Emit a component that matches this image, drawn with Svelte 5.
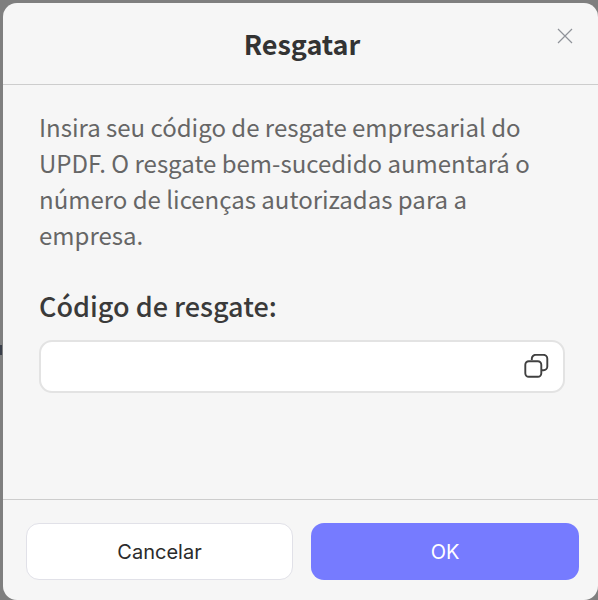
<script lang="ts">
	let code = $state('');
</script>

<div class="backdrop">
	<span class="peek"></span>
	<div class="dialog">
		<header class="head">
			<h1>Resgatar</h1>
			<button class="close" aria-label="Fechar">
				<svg width="16" height="16" viewBox="0 0 16 16" fill="none">
					<path d="M1 1L15 15M15 1L1 15" stroke="#8f9299" stroke-width="1.2" />
				</svg>
			</button>
		</header>

		<div class="body">
			<p>Insira seu código de resgate empresarial do UPDF. O resgate bem-sucedido aumentará o número de licenças autorizadas para a empresa.</p>
			<label for="code">Código de resgate:</label>
			<div class="field">
				<input id="code" bind:value={code} />
				<svg width="26" height="26" viewBox="0 0 26 26" fill="none" stroke="#404040" stroke-width="1.9">
					<rect x="2.3" y="7.2" width="16" height="15.6" rx="3.5" />
					<path d="M8.8 6V4.8a4 4 0 0 1 4-4H20.3a4 4 0 0 1 4 4V12.5a3.7 3.7 0 0 1-3.7 3.7H19" />
				</svg>
			</div>
		</div>

		<footer class="foot">
			<button class="btn cancel">Cancelar</button>
			<button class="btn ok">OK</button>
		</footer>
	</div>
</div>

<style>
	:global(body) {
		margin: 0;
		background: #7f7f7f;
	}

	.backdrop {
		position: relative;
		height: 600px;
		padding: 3px 0 0 3px;
		box-sizing: border-box;
		overflow: hidden;
	}

	/* bit of the page behind, showing past the dialog edge */
	.peek {
		position: absolute;
		left: 0;
		top: 345px;
		width: 2px;
		height: 10px;
		background: #3a3f4a;
	}

	.dialog {
		position: relative;
		height: 597px;
		display: flex;
		flex-direction: column;
		background: #f6f6f6;
		border-radius: 14px;
		font-family: "Noto Sans CJK SC", "Noto Sans", sans-serif;
		width: 595px;
	}

	.head {
		height: 82px;
		flex: none;
		box-sizing: border-box;
		padding-left: 3px;
		display: flex;
		align-items: center;
		justify-content: center;
		position: relative;
		border-bottom: 1px solid #cdcdcd;
	}

	h1 {
		margin: 0;
		font-size: 27px;
		font-weight: 700;
		color: #333;
	}

	.close {
		position: absolute;
		top: 25px;
		right: 25px;
		padding: 0;
		border: none;
		background: none;
		display: flex;
	}

	.body {
		flex: 1;
		padding: 24px 36px 0;
	}

	p {
		margin: 0;
		font-size: 24px;
		line-height: 36px;
		color: #666;
	}

	label {
		display: block;
		margin-top: 33px;
		font-size: 27px;
		font-weight: 500;
		line-height: 40px;
		color: #3a3a3a;
	}

	.field {
		margin-top: 14px;
		width: 526px;
		height: 53px;
		box-sizing: border-box;
		display: flex;
		align-items: center;
		padding: 0 14px 0 10px;
		background: #fff;
		border: 2px solid #e3e3e3;
		border-radius: 13px;
	}

	input {
		flex: 1;
		min-width: 0;
		border: none;
		outline: none;
		background: none;
	}

	.foot {
		height: 101px;
		flex: none;
		box-sizing: border-box;
		display: grid;
		grid-template-columns: 267px 1fr;
		gap: 18px;
		padding: 23px 19px 0 23px;
		border-top: 1px solid #cdcdcd;
	}

	.btn {
		height: 57px;
		padding: 0;
		box-sizing: border-box;
		border-radius: 13px;
		font-family: Inter, sans-serif;
		font-size: 20px;
	}

	.cancel {
		background: #fff;
		border: 1px solid #e1e1e8;
		color: #2b2b2b;
	}

	.ok {
		background: #767bff;
		border: none;
		color: #fff;
	}
</style>
